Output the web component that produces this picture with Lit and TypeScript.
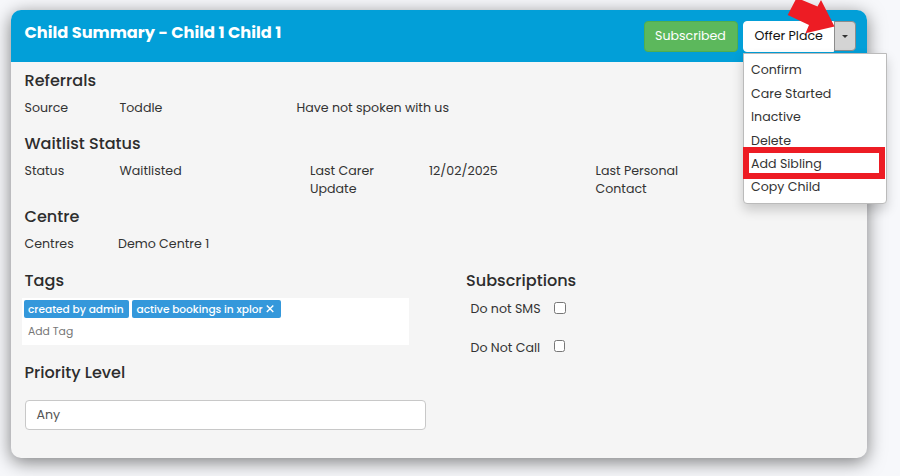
import { LitElement, html, css } from "lit";

const t = (text: string) => html`<div class="t">${text}</div>`;

class AppRoot extends LitElement {
  static styles = css`
    :host {
      display: block;
      height: 476px;
      overflow: hidden;
      background: #f7f8fb;
      color: #333;
      font: 12.6px/18px Poppins, Inter, "Open Sans", sans-serif;
      position: relative;
    }
    * { box-sizing: border-box; }
    .t { white-space: nowrap; }
    .page { padding: 10px 33px 0 11px; height: 476px; }
    .card {
      height: 448px;
      background: #f5f5f5;
      border-radius: 10px;
      box-shadow: 0 4px 18px rgba(0, 0, 0, 0.5);
      display: flex;
      flex-direction: column;
    }
    header {
      height: 52px;
      flex: none;
      background: #029fd8;
      border-radius: 10px 10px 0 0;
      display: flex;
      padding: 11px 11px 0 13.5px;
      align-items: flex-start;
    }
    h1 { margin: 0; flex: 1; color: #fff; font-size: 16.2px; line-height: 23px; font-weight: 700; }
    h2 { margin: 0; font-size: 16.1px; line-height: 24px; font-weight: 500; color: #2d2d2d; }
    .btn {
      height: 31px;
      border: 1px solid #4fae4f;
      border-radius: 4px;
      background: #5cb85c;
      color: #fff;
      padding: 5px 10px 0;
      width: 94px;
      flex: none;
    }
    .group { display: flex; margin-left: 5px; }
    .offer { width: 91px; background: #fff; border-color: #fff; color: #111; border-radius: 4px 0 0 4px; padding-left: 10.5px; }
    .toggle {
      width: 22px; height: 30px; background: #d4d4d4; border: 1px solid #8c8c8c;
      border-radius: 0 4px 4px 0; display: flex; align-items: center; justify-content: center;
    }
    .caret { border: 3px solid transparent; border-top-color: #333; border-bottom: 0; }
    .body { padding: 7px 14px 0 13.5px; }
    .row { display: grid; margin-top: 6px; height: 18px; }
    .ref { grid-template-columns: 95px 177px 1fr; }
    .wait { grid-template-columns: 95px 190.5px 119px 166.5px 1fr; height: 36px; }
    .cen { grid-template-columns: 93.5px 1fr; }
    .gap { margin-top: 15px; }
    .gap2 { margin-top: 7px; }
    .cols { display: grid; grid-template-columns: 441.5px 1fr; margin-top: 16px; }
    .tags {
      margin: 5px 0 0 -2.5px; width: 387px; height: 47px; background: #fff; padding: 2px 2px 0;
      font-size: 10.8px; line-height: 18px;
    }
    .chips { display: flex; gap: 3px; }
    .chip {
      height: 18px; background: #3498db; color: #fff; border-radius: 2px; padding: 1px 4px 0;
      width: 105px; font-size: 10.6px; font-weight: 500; display: flex;
    }
    .chip.wide { width: 149px; padding-left: 4.5px; }
    .chip svg { margin: 4px 0 0 auto; }
    .add { color: #777; margin: 5px 0 0 4px; }
    .prio { margin-top: 4px; }
    .input {
      margin: 15px 0 0 0.5px; width: 401px; height: 30px; border: 1px solid #c8c8c8; border-radius: 4px;
      background: #fff; padding: 5px 10.5px; color: #555;
    }
    .check { display: grid; grid-template-columns: 83px 12px; align-items: center; margin: 7px 0 0 4.5px; height: 18px; }
    .check + .check { margin-top: 21px; }
    .box { width: 12px; height: 12px; border: 1px solid #777; border-radius: 2.5px; background: #fff; margin-top: -2px; }
    .check + .check .box { margin-top: -4px; width: 11.5px; height: 11.5px; }
    .menu {
      position: absolute; left: 743px; top: 53px; width: 144px; height: 151px; background: #fff;
      border: 1px solid #bbb; border-radius: 0 0 4px 4px; box-shadow: 0 6px 12px rgba(0, 0, 0, 0.18);
      padding: 4.3px 7px; line-height: 23.4px;
    }
    .mark { position: absolute; left: 743px; top: 147px; width: 142px; height: 32px; border: 6px solid #ed1c24; }
    .arrow { position: absolute; left: 780px; top: 0; }
  `;
  render() {
    return html`
      <div class="page">
        <div class="card">
          <header>
            <h1>${t("Child Summary - Child 1 Child 1")}</h1>
            <div class="btn">${t("Subscribed")}</div>
            <div class="group">
              <div class="btn offer">${t("Offer Place")}</div>
              <div class="toggle"><i class="caret"></i></div>
            </div>
          </header>
          <div class="body">
            <h2>${t("Referrals")}</h2>
            <div class="row ref">${t("Source")}${t("Toddle")}${t("Have not spoken with us")}</div>
            <h2 class="gap">${t("Waitlist Status")}</h2>
            <div class="row wait">
              ${t("Status")}${t("Waitlisted")}
              <div>${t("Last Carer")}${t("Update")}</div>
              ${t("12/02/2025")}
              <div>${t("Last Personal")}${t("Contact")}</div>
            </div>
            <h2 class="gap2">${t("Centre")}</h2>
            <div class="row cen">${t("Centres")}${t("Demo Centre 1")}</div>
            <div class="cols">
              <div>
                <h2>${t("Tags")}</h2>
                <div class="tags">
                  <div class="chips">
                    <div class="chip">${t("created by admin")}</div>
                    <div class="chip wide">
                      ${t("active bookings in xplor")}
                      <svg width="11" height="8"><path d="M0.8 0.5L7.3 7M7.3 0.5L0.8 7" stroke="#fff" stroke-width="1.4" /></svg>
                    </div>
                  </div>
                  <div class="add">${t("Add Tag")}</div>
                </div>
              </div>
              <div>
                <h2>${t("Subscriptions")}</h2>
                <div class="check">${t("Do not SMS")}<i class="box"></i></div>
                <div class="check">${t("Do Not Call")}<i class="box"></i></div>
              </div>
            </div>
            <h2 class="prio">${t("Priority Level")}</h2>
            <div class="input">${t("Any")}</div>
          </div>
        </div>
      </div>
      <div class="menu">
        ${t("Confirm")}${t("Care Started")}${t("Inactive")}${t("Delete")}${t("Add Sibling")}${t("Copy Child")}
      </div>
      <div class="mark"></div>
      <svg class="arrow" width="60" height="40">
        <path d="M15.5 0L7.7 15L29 25L25.5 33.3L54.5 26.5L41 0L37.5 6.5L22 0Z" fill="#ed1c24" />
      </svg>
    `;
  }
}
customElements.define("app-root", AppRoot);
